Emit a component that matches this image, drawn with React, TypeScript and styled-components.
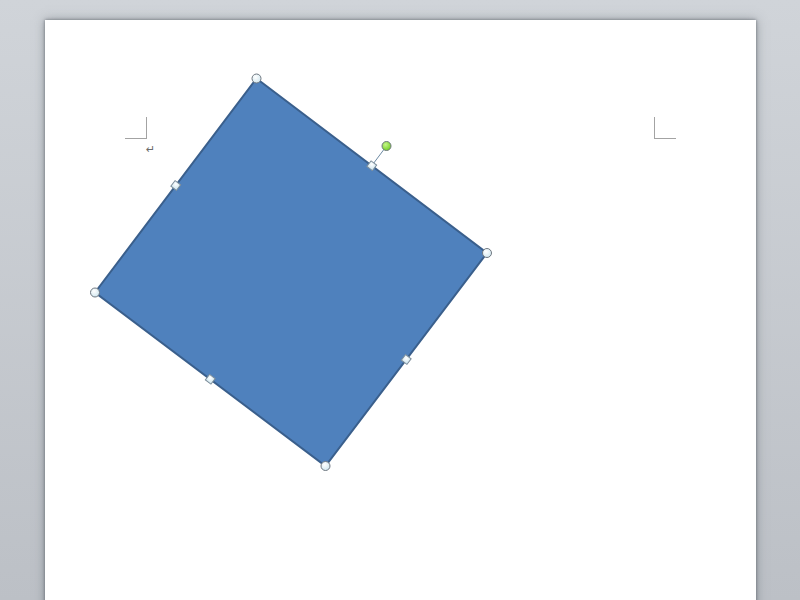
import React from 'react'
import styled, { createGlobalStyle } from 'styled-components'

const GlobalStyle = createGlobalStyle`
  html, body {
    margin: 0;
    height: 100%;
    overflow: hidden;
  }
  body {
    background: linear-gradient(#d0d4d9, #bcc0c6);
    font-family: "Liberation Sans", Arial, sans-serif;
  }
`

const Workspace = styled.div`
  width: 800px;
  height: 600px;
  padding: 20px 0 0 45px;
  box-sizing: border-box;
  overflow: hidden;
`

const Page = styled.div`
  position: relative;
  width: 711px;
  height: 640px;
  background: #ffffff;
  box-shadow: 0 0 3px rgba(60, 66, 74, 0.6), 0 0 10px rgba(90, 96, 104, 0.5);
`

const MarginRow = styled.div`
  display: flex;
  justify-content: space-between;
  padding: 97px 80px 0 80px;
`

const CornerMark = styled.div<{ $side: 'left' | 'right' }>`
  width: 22px;
  height: 22px;
  box-sizing: border-box;
  border-bottom: 1px solid #a3a3a3;
  ${(p) => (p.$side === 'left' ? 'border-right: 1px solid #a3a3a3;' : 'border-left: 1px solid #a3a3a3;')}
`

const Paragraph = styled.div`
  padding: 5px 0 0 101px;
  font-family: "DejaVu Sans", sans-serif;
  font-size: 11px;
  line-height: 12px;
  color: #6a6a6a;
`

const Canvas = styled.svg`
  position: absolute;
  left: 0;
  top: 0;
`

const corners = [
  [256.5, 78.5],
  [487, 253],
  [325.5, 466],
  [95, 292.5],
]

export default function App() {
  const mids = corners.map((c, i) => {
    const n = corners[(i + 1) % 4]
    return [(c[0] + n[0]) / 2, (c[1] + n[1]) / 2]
  })
  const angle = (Math.atan2(175, 231) * 180) / Math.PI
  return (
    <>
      <GlobalStyle />
      <Workspace>
        <Page>
          <MarginRow>
            <CornerMark $side="left" />
            <CornerMark $side="right" />
          </MarginRow>
          <Paragraph>↵</Paragraph>
          <Canvas width={711} height={640}>
            <defs>
              <radialGradient id="hnd" cx="40%" cy="35%" r="70%">
                <stop offset="0" stopColor="#ffffff" />
                <stop offset="1" stopColor="#cfe6ef" />
              </radialGradient>
              <radialGradient id="rot" cx="40%" cy="35%" r="70%">
                <stop offset="0" stopColor="#c6f58a" />
                <stop offset="1" stopColor="#6fcf1f" />
              </radialGradient>
            </defs>
            <g transform="translate(-45 -20)">
              <polygon
                points={corners.map((c) => c.join(',')).join(' ')}
                fill="#4f81bd"
                stroke="#3a5f8c"
                strokeWidth={2}
                strokeLinejoin="miter"
              />
              <line x1={371.75} y1={165.75} x2={386.5} y2={146} stroke="#6d8aa3" strokeWidth={1} />
              {mids.map((m, i) => (
                <rect
                  key={i}
                  x={m[0] - 3.5}
                  y={m[1] - 3.5}
                  width={7}
                  height={7}
                  fill="url(#hnd)"
                  stroke="#7c8c99"
                  strokeWidth={1}
                  transform={`rotate(${angle} ${m[0]} ${m[1]})`}
                />
              ))}
              {corners.map((c, i) => (
                <circle key={i} cx={c[0]} cy={c[1]} r={4.5} fill="url(#hnd)" stroke="#6f7780" strokeWidth={1} />
              ))}
              <circle cx={386.5} cy={146} r={4.5} fill="url(#rot)" stroke="#6f7780" strokeWidth={1} />
            </g>
          </Canvas>
        </Page>
      </Workspace>
    </>
  )
}
